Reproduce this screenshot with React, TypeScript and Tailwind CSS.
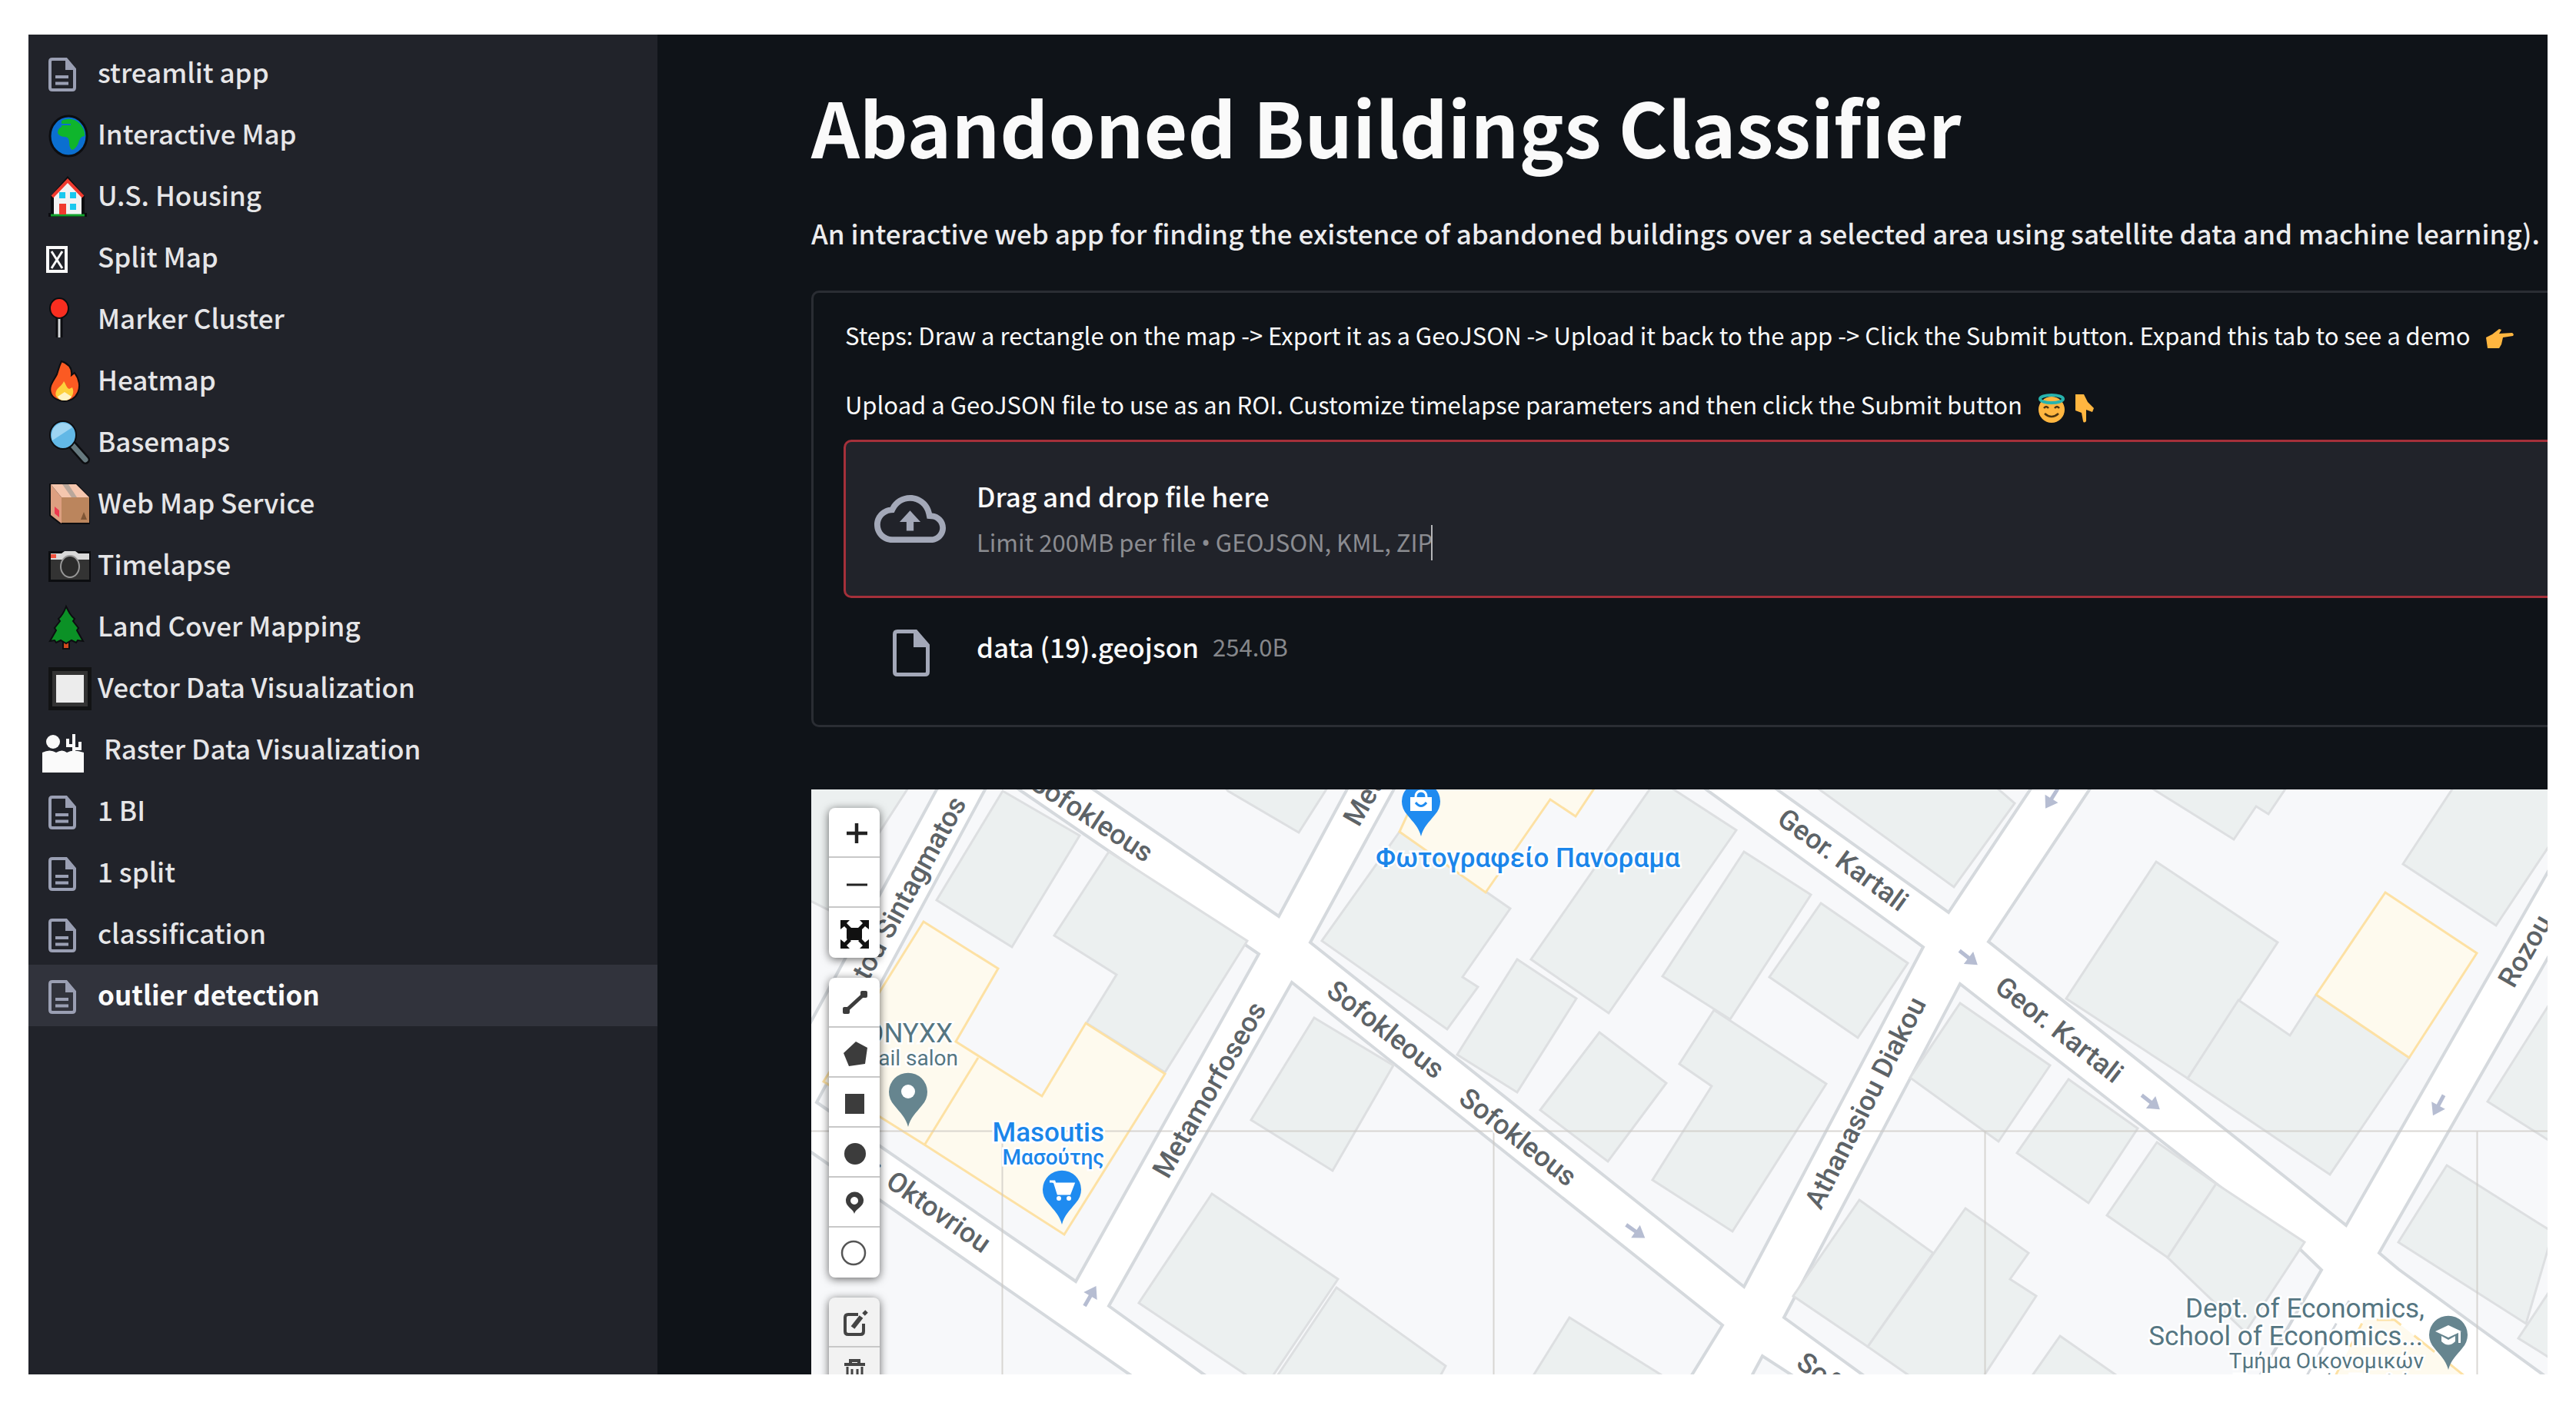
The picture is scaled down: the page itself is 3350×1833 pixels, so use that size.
import type { ReactNode } from 'react';

// Small pictograms used by the page list, all on the same 56x60 grid
function DocIcon() {
  return (
    <g fill="none" stroke="#9a9fb3" strokeWidth="4">
      <path d="M8 12h18l11 13v24q0 3-3 3H8q-3 0-3-3V15q0-3 3-3z" />
      <path d="M25 11v15h13z" fill="#9a9fb3" stroke="none" />
      <path d="M12 35h17M12 43.500h17" />
    </g>
  );
}

const ICONS: Record<string, ReactNode> = {
  doc: <DocIcon />,
  globe: (
    <g>
      <ellipse cx="29" cy="32" rx="24" ry="26" fill="#0b6fd0" stroke="#0c0d10" strokeWidth="3" />
      <path d="M20 12q14-6 24 4 7 8 6 16-5 0-7 6-3 10-9 12-4-2-4-10 0-6-5-7-8 0-10-5 0-6 5-8z" fill="#0fb52c" />
      <path d="M20 17h12" stroke="#0b6fd0" strokeWidth="2" />
    </g>
  ),
  house: (
    <g>
      <path d="M3 57h50v-5h-3V30L28 4 6 30v22H3z" fill="#0c0d10" />
      <path d="M10 30v25h36V30L28 11z" fill="#f2f2f2" />
      <path d="M8 31L28 10l20 21" fill="none" stroke="#f03a2e" strokeWidth="4" />
      <path d="M6 55h44" stroke="#12a12c" strokeWidth="3" />
      <path d="M17 40h9v14h-9z" fill="#f03a2e" />
      <path d="M17 25h8v8h-8zM31 25h8v8h-8zM31 40h8v8h-8z" fill="#19c8ee" />
    </g>
  ),
  missing: (
    <g fill="none" stroke="#fafafa">
      <path d="M2 17h24v31H2z" strokeWidth="4" />
      <path d="M7 22l14 22M21 22L7 44" strokeWidth="3" />
    </g>
  ),
  pin: (
    <g>
      <path d="M17 18v36" stroke="#0c0d10" strokeWidth="9" />
      <path d="M17 26v28" stroke="#d5d8da" strokeWidth="3" />
      <ellipse cx="17" cy="16" rx="12" ry="13" fill="#fa2e20" stroke="#0c0d10" strokeWidth="2" />
    </g>
  ),
  fire: (
    <g>
      <path
        d="M20 5c9 3 14 9 13 18l4-3c6 8 8 18 4 26-3 7-10 11-17 11S8 53 6 46C3 37 10 30 14 22c2-6 3-11 6-17z"
        fill="#fb5a22"
        stroke="#0c0d10"
        strokeWidth="2"
      />
      <path d="M23 31c3 4 3 8 7 10l4-2c4 8-2 17-10 17S9 50 14 42c3-4 7-6 9-11z" fill="#fdd03c" />
      <path d="M24 45l9 6q-3 5-9 5-7 0-9-5z" fill="#fff3c4" />
    </g>
  ),
  magnifier: (
    <g>
      <path d="M35 35l16 18" stroke="#0c0d10" strokeWidth="12" strokeLinecap="round" />
      <path d="M35 35l16 18" stroke="#66797f" strokeWidth="7" strokeLinecap="round" />
      <ellipse cx="22" cy="21" rx="17" ry="18" fill="#62b8e6" stroke="#0c0d10" strokeWidth="2" />
      <path d="M8 28Q4 10 20 5q10 0 14 6z" fill="#9ed5f2" />
    </g>
  ),
  box: (
    <g>
      <path d="M4 4h36l17 18v35H18L4 46z" fill="#0c0d10" />
      <path d="M6 5l14 17v34L6 45z" fill="#dd9f80" />
      <path d="M20 22h36v33H20z" fill="#bb855d" />
      <path d="M6 5h33l17 17H20z" fill="#f5c6ae" />
      <path d="M21 5h8l11 17h-7z" fill="#b9a79b" />
      <path d="M11 34l6 5v9l-6-5z" fill="#ee3a50" />
      <path d="M45 51l4-10 4 10z" fill="#7f5636" />
    </g>
  ),
  camera: (
    <g>
      <path d="M3 12h55v40H3z" fill="#0c0d10" />
      <path d="M6 22h50v27H6z" fill="#333" />
      <path d="M6 15h14l4-3h14l4 3h14v8H6z" fill="#d9d9d9" />
      <path d="M6 16h7v5H6z" fill="#f0523e" />
      <ellipse cx="31" cy="32" rx="12" ry="14" fill="#2b2b2b" stroke="#979797" strokeWidth="2" />
    </g>
  ),
  tree: (
    <g stroke="#0c0d10" strokeWidth="2">
      <path d="M22 46h8v13h-8z" fill="#d14a1d" />
      <path d="M26 4c4 8 6 12 11 16l-2 3 7 9-2 3 8 14-7-1-2 3-6-3-7 4-7-4-6 3-2-3-6 1 8-14-2-3 7-9-2-3c5-4 7-8 10-16z" fill="#0b9126" />
    </g>
  ),
  square: (
    <g>
      <path d="M3 3h56v56H3z" fill="#121314" />
      <path d="M8 8h46v46H8z" fill="#333" />
      <path d="M13 13h36v36H13z" fill="#ececec" />
    </g>
  ),
  desert: (
    <g fill="#fafafa">
      <circle cx="9" cy="20" r="9" />
      <path d="M-5 34q10-5 18 0 8-5 14 0 8-5 22 0v26H-5z" />
      <path d="M36 34V10M28 16v9h8M44 20v9h-8" fill="none" stroke="#fafafa" strokeWidth="4" />
    </g>
  ),
};

const PAGES = [
  { name: 'streamlit app', icon: 'doc' },
  { name: 'Interactive Map', icon: 'globe' },
  { name: 'U.S. Housing', icon: 'house' },
  { name: 'Split Map', icon: 'missing' },
  { name: 'Marker Cluster', icon: 'pin' },
  { name: 'Heatmap', icon: 'fire' },
  { name: 'Basemaps', icon: 'magnifier' },
  { name: 'Web Map Service', icon: 'box' },
  { name: 'Timelapse', icon: 'camera' },
  { name: 'Land Cover Mapping', icon: 'tree' },
  { name: 'Vector Data Visualization', icon: 'square' },
  { name: '\u00a0Raster Data Visualization', icon: 'desert' },
  { name: '1 BI', icon: 'doc' },
  { name: '1 split', icon: 'doc' },
  { name: 'classification', icon: 'doc' },
  { name: 'outlier detection', icon: 'doc', active: true },
];

function Sidebar() {
  return (
    <nav className="w-[818px] shrink-0 bg-[#21232a] pt-2.5">
      <ul>
        {PAGES.map(({ name, icon, active }) => (
          <li key={name}>
            <a
              href="#"
              className={`flex h-20 items-center pl-[23px] text-[35px] whitespace-pre ${
                active ? 'bg-[#31333c] font-bold text-[#fafafa]' : 'font-medium text-[#e6e6e8]'
              }`}
            >
              <svg viewBox="0 0 56 60" className="mr-[11px] h-[60px] w-[56px] shrink-0 overflow-visible">
                {ICONS[icon]}
              </svg>
              <span className="pb-1 leading-[48px]">{name}</span>
            </a>
          </li>
        ))}
      </ul>
    </nav>
  );
}

function PointRight() {
  return (
    <svg viewBox="0 0 38 26" className="ml-5 inline h-[26px] w-[38px]">
      <path d="M3 25L1 11l8-4 9-7 3 1-3 5 17-1q3 2 1 4l-13 2-2 9-3 5z" fill="#ffb640" />
    </svg>
  );
}

function PointDown() {
  return (
    <svg viewBox="0 0 26 38" className="ml-3 inline h-[38px] w-[26px]">
      <path d="M1 1h11l5 10 8 8-2 5-8-3v15q-3 3-4 0l-2-11-8-3z" fill="#ffb640" />
    </svg>
  );
}

function HaloFace() {
  return (
    <svg viewBox="0 0 36 38" className="ml-5 inline h-[38px] w-[36px]">
      <ellipse cx="18" cy="21" rx="17" ry="17" fill="#ffb640" />
      <ellipse cx="18" cy="7" rx="15" ry="5" fill="none" stroke="#27b3ad" strokeWidth="4" />
      <path d="M8 19q3-4 6 0M22 19q3-4 6 0M9 26q9 8 18 0" fill="none" stroke="#4d3510" strokeWidth="2.500" />
    </svg>
  );
}

function UploadPanel() {
  return (
    <section className="mt-[51px] rounded-l-[10px] border-[3px] border-r-0 border-[#2a2d33] pt-[31px] pb-[61px] pl-[39px]">
      <p className="pl-0.5 text-[31px] leading-[48px] whitespace-nowrap">
        {'Steps: Draw a rectangle on the map -> Export it as a GeoJSON -> Upload it back to the app -> Click the Submit button. Expand this tab to see a demo'}
        <PointRight />
      </p>
      <p className="mt-[42px] pl-0.5 text-[31px] leading-[48px] whitespace-nowrap">
        Upload a GeoJSON file to use as an ROI. Customize timelapse parameters and then click the Submit button
        <HaloFace />
        <PointDown />
      </p>

      <label className="mt-[22px] flex h-[206px] items-center rounded-l-[10px] border-[3px] border-r-0 border-[#a5303a] bg-[#21232a] pl-[37px]">
        <input type="file" className="sr-only" />
        <svg viewBox="0 4 24 16" className="mr-10 h-[62px] w-[93px]" fill="#a3a8b8">
          <path d="M19.350 10.040C18.670 6.590 15.640 4 12 4 9.110 4 6.600 5.640 5.350 8.040 2.340 8.360 0 10.910 0 14c0 3.310 2.690 6 6 6h13c2.760 0 5-2.240 5-5 0-2.640-2.050-4.780-4.650-4.960zM19 18H6c-2.210 0-4-1.790-4-4 0-2.050 1.530-3.760 3.560-3.970l1.070-.110.500-.950C8.080 7.140 9.940 6 12 6c2.620 0 4.880 1.860 5.390 4.430l.300 1.500 1.530.110c1.560.100 2.780 1.410 2.780 2.960 0 1.650-1.350 3-3 3z" />
          <path d="M8.500 13h2.300v3h2.400v-3h2.300L12 9.200z" />
        </svg>
        <span className="flex flex-col">
          <span className="text-[35px] leading-[60px] font-medium">Drag and drop file here</span>
          <span className="relative text-[31px] leading-[60px] text-[#8b8c91]">
            Limit 200MB per file <span className="font-['Noto_Sans']">•</span> GEOJSON, KML, ZIP
            <span className="absolute top-2 right-0 h-[46px] w-0.5 bg-[#b4b5b8]" />
          </span>
        </span>
      </label>

      <div className="mt-[38px] flex h-[66px] items-center pl-[64px]">
        <svg viewBox="0 0 48 61" className="mr-[61px] h-[61px] w-[48px]">
          <path d="M6 2.500h24l15.500 18V55q0 3.500-3.500 3.500H6q-3.500 0-3.500-3.500V6q0-3.500 3.500-3.500z" fill="none" stroke="#a3a8b8" strokeWidth="5" />
          <path d="M27 2v21h20z" fill="#a3a8b8" />
        </svg>
        <span className="pb-4 text-[35px] leading-[48px] font-medium">data (19).geojson</span>
        <span className="ml-[18px] pb-4 text-[31px] leading-[48px] text-[#85878b]">254.0B</span>
      </div>
    </section>
  );
}

// City blocks; whatever lies between them reads as streets
const BLOCKS = [
  '249,-40 225,2 7,407 344,640 582,214 273,2 220,-35',
  '-10,-10 170,-10 162,2 -10,320',
  '350,-10 370,2 608,165 701,-8',
  '762,-8 649,199 1213,647 1446,205 1150,-10',
  '625,251 1185,697 1137,775 530,775 387,672',
  '-10,465 0,472 434,775 -10,775',
  '1242,-10 1479,160 1592,-10',
  '1669,-10 1531,198 1996,567 2270,87 2270,-10',
  '1494,253 1265,687 1390,778 1875,778 1964,625 1936,598',
  '2039,603 2064,624 2275,778 2275,190',
  '1237,737 1215,778 1300,778',
];

const BUILDINGS = [
  '-5,-5 128,-5 23,157 -5,143',
  '249,2 349,60 261,205 163,144',
  '387,81 567,197 460,368 358,304 397,241 316,190',
  '536,-5 542,2 634,56 673,-5',
  '654,297 757,359 678,496 572,430',
  '521,526 685,637 590,778 426,668',
  '683,648 825,750 810,778 596,778',
  '986,687 1130,777 930,777',
  '765,55 909,155 847,244 867,257 827,312 664,197',
  '1100,-14 1203,53 1037,291 936,221',
  '1213,81 1300,137 1195,299 1107,243',
  '1313,148 1426,226 1361,323 1246,244',
  '918,221 995,272 918,394 840,345',
  '1025,316 1112,382 1036,484 948,417',
  '1174,287 1320,383 1198,575 1094,508 1171,386 1129,357',
  '1300,-8 1486,127 1565,18 1535,-8',
  '1733,-8 1850,65 1879,22 1895,32 1922,-8',
  '2139,-8 2070,97 2191,177 2265,66 2265,-8',
  '1749,94 1907,199 1790,376 1632,272',
  '1856,274 1923,320 1957,267 2078,349 1975,501 1790,376',
  '1494,278 1611,359 1544,458 1429,375',
  '1635,377 1725,441 1661,538 1568,473',
  '1750,459 1827,513 1764,609 1685,554',
  '1827,513 1942,589 1865,706 1764,609',
  '1363,534 1459,603 1374,725 1277,659',
  '1501,545 1583,603 1559,637 1593,659 1515,778 1450,778 1374,725',
  '1624,711 1720,778 1577,778',
  '2127,489 2265,576 2230,695 2064,589',
  '2265,646 2220,714 2265,742',
  '2265,272 2180,406 2265,460',
];

const SHOPS = [
  '146,172 243,233 188,328 300,399 357,304 460,370 329,579 147,462 16,380',
  '795,-10 765,55 877,134 961,13 994,35 1024,-10',
  '2047,134 2166,213 2078,349 1957,267',
];

// x, y and angle of where the baseline starts
const STREETS: [string, number, number, number][] = [
  ['Sofokleous', 282, -3, 33],
  ['Sofokleous', 668, 266, 38],
  ['Sofokleous', 840, 406, 38],
  ['Sofokleous', 1279, 750, 37],
  ['tou Sintagmatos', 74, 250, -61],
  ['Metamorfoseos', 464, 508, -60],
  ['Metamorfoseos', 712, 50, -60],
  ['Oktovriou', 95, 515, 35],
  ['Geor. Kartali', 1254, 43, 36],
  ['Geor. Kartali', 1537, 261, 38],
  ['Athanasiou Diakou', 1313, 548, -63],
  ['Rozou', 2214, 260, -60],
];

const ARROWS = [
  [363, 659, -60],
  [1072, 575, 35],
  [1505, 219, 38],
  [1742, 407, 38],
  [1613, 12, 122],
  [2116, 411, 118],
];

function Pin({ x, y, color, children }: { x: number; y: number; color: string; children: ReactNode }) {
  return (
    <g transform={`translate(${x} ${y})`}>
      <path d="M0 46C-3 34-10 28-18 18A25 25 0 1 1 18 18C10 28 3 34 0 46z" fill={color} />
      {children}
    </g>
  );
}

function StreetMap() {
  return (
    <svg
      viewBox="0 0 2258 762"
      preserveAspectRatio="xMinYMin slice"
      className="absolute inset-0 h-full w-full bg-white font-['Roboto','Noto_Sans',sans-serif]"
    >
      <g fill="#f7f8fa" stroke="#d5d9dd" strokeWidth="4">
        {BLOCKS.map((p) => <polygon key={p} points={p} />)}
      </g>
      <g fill="#ecf0f0" stroke="#dddfe1" strokeWidth="3">
        {BUILDINGS.map((p) => <polygon key={p} points={p} />)}
      </g>
      <g fill="#fefaee" stroke="#fde1a4" strokeWidth="3">
        {SHOPS.map((p) => <polygon key={p} points={p} />)}
        <path d="M217 349L147 463" />
        <path d="M1976 775l43-85h40l106 85z" strokeDasharray="34 22" />
      </g>
      <path d="M1943 661l-63 110M2000 665l-62 110" fill="none" stroke="#d3d7dc" strokeWidth="3" strokeDasharray="16 18" />

      {/* tile seams */}
      <path d="M0 444.500h2258M248.500 444v320M887.500 444v320M1526.500 444v320M2166.500 444v320" stroke="#cbc7c2" strokeWidth="2" opacity=".7" />

      <g fill="#b6bdd2">
        {ARROWS.map(([x, y, a]) => (
          <path key={`${x}-${y}`} d="M-15-2.500H0V-10L15 0 0 10V2.500h-15z" transform={`translate(${x} ${y}) rotate(${a})`} />
        ))}
      </g>

      <g fill="#5d6367" stroke="#fff" strokeWidth="5" paintOrder="stroke" fontSize="36" fontWeight="500">
        {STREETS.map(([name, x, y, a]) => (
          <text key={`${x}-${y}`} transform={`translate(${x} ${y}) rotate(${a})`}>{name}</text>
        ))}
        <text x="83" y="492">.</text>
      </g>

      <g stroke="#fff" strokeWidth="5" paintOrder="stroke" fontWeight="500" fill="#1b86ea">
        <text x="734" y="101" fontSize="35">Φωτογραφείο Πανοραμα</text>
        <text x="381" y="458" fontSize="35" textAnchor="end">Masoutis</text>
        <text x="381" y="488" fontSize="28" textAnchor="end">Μασούτης</text>
      </g>
      <g stroke="#fff" strokeWidth="5" paintOrder="stroke" fill="#557682" textAnchor="end">
        <text x="184" y="329" fontSize="35">ONYXX</text>
        <text x="191" y="359" fontSize="28">nail salon</text>
        <text x="2098" y="687" fontSize="35">Dept. of Economics,</text>
        <text x="2096" y="723" fontSize="35">School of Economics...</text>
        <text x="2097" y="753" fontSize="28">Τμήμα Οικονομικών</text>
        <text x="2080" y="781" fontSize="28">Γραμματεία Σχολή</text>
      </g>

      <Pin x={126} y={393} color="#66858f">
        <circle r="9" fill="#fff" />
      </Pin>
      <Pin x={326} y={520} color="#1f8bf0">
        <path d="M-16-10h6l5 16h15l5-13H-8" fill="#fff" stroke="#fff" strokeWidth="3" />
        <circle cx="-4" cy="12" r="3" fill="#fff" />
        <circle cx="9" cy="12" r="3" fill="#fff" />
      </Pin>
      <Pin x={793} y={15} color="#1f8bf0">
        <path d="M-14-5h28v18h-28z" fill="#fff" />
        <path d="M-7-5q0-8 7-8t7 8" fill="none" stroke="#fff" strokeWidth="3" />
        <path d="M-7 2q7 9 14 0" fill="none" stroke="#1f8bf0" strokeWidth="3" />
      </Pin>
      <Pin x={2129} y={709} color="#66858f">
        <path d="M0-12l17 8L0 4l-17-8z" fill="#fff" />
        <path d="M-9 2v7q9 9 18 0V2L0 7zM13-3h3v14h-3z" fill="#fff" />
      </Pin>
    </svg>
  );
}

const TOOL_GROUPS: { disabled?: boolean; tools: { name: string; icon: ReactNode }[] }[] = [
  {
    tools: [
      { name: 'Zoom in', icon: <path d="M23 33h27M36 20v26" stroke="#222" strokeWidth="4.500" /> },
      { name: 'Zoom out', icon: <path d="M23 35h27" stroke="#222" strokeWidth="3" /> },
      {
        name: 'Full screen',
        icon: (
          <g fill="#111">
            <rect x="23" y="26" width="20" height="16" rx="3" />
            <path d="M15 16h12l-4 4 6 6-4 3-5-5-5 4zM52 16H40l4 4-6 6 4 3 5-5 5 4zM15 53h12l-4-4 6-6-4-3-5 5-5-4zM52 53H40l4-4-6-6 4-3 5 5 5-4z" />
          </g>
        ),
      },
    ],
  },
  {
    tools: [
      {
        name: 'Draw a polyline',
        icon: (
          <g fill="#3c3c3c">
            <path d="M22 43L46 21" stroke="#3c3c3c" strokeWidth="5" />
            <rect x="18" y="38" width="9" height="9" rx="2" />
            <rect x="41" y="17" width="9" height="9" rx="2" />
          </g>
        ),
      },
      { name: 'Draw a polygon', icon: <path d="M35 18l15 8-3 21-21 3-7-17z" fill="#3c3c3c" /> },
      { name: 'Draw a rectangle', icon: <path d="M21 21h25v26H21z" fill="#3c3c3c" /> },
      { name: 'Draw a circle', icon: <circle cx="34" cy="34" r="14" fill="#3c3c3c" /> },
      {
        name: 'Draw a marker',
        icon: <path fillRule="evenodd" d="M33 47C31 40 22 38 22 30a11 11 0 0 1 23 0c0 8-10 10-12 17zM33 25a5 5 0 1 0 .1 0z" fill="#3c3c3c" />,
      },
      { name: 'Draw a circle marker', icon: <circle cx="32" cy="33" r="15" fill="none" stroke="#555" strokeWidth="2.500" /> },
    ],
  },
  {
    disabled: true,
    tools: [
      {
        name: 'Edit layers',
        icon: (
          <g fill="none" stroke="#444" strokeWidth="4">
            <path d="M38 22H25q-4 0-4 4v18q0 4 4 4h16q4 0 4-4V34" />
            <path d="M31 39l11-14" strokeWidth="6" />
            <path d="M45 22l4-4" strokeWidth="5" />
          </g>
        ),
      },
      {
        name: 'Delete layers',
        icon: (
          <g fill="none" stroke="#444" strokeWidth="3">
            <path d="M20 22h27M28 21v-4h11v4" strokeWidth="4" />
            <path d="M24 25v22h19V25M30 28v16M37 28v16" />
          </g>
        ),
      },
    ],
  },
];

function MapControls() {
  return (
    <div className="absolute top-6 left-[23px] flex w-[66px] flex-col gap-[26px]">
      {TOOL_GROUPS.map(({ tools, disabled }) => (
        <div
          key={tools[0].name}
          className={`overflow-hidden rounded-lg shadow-[0_2px_12px_rgba(0,0,0,0.6)] ${disabled ? 'bg-[#f2f2f2]' : 'bg-white'}`}
        >
          {tools.map(({ name, icon }) => (
            <button key={name} aria-label={name} className="block h-[65px] w-full border-b-2 border-[#c8c8c8] last:border-b-0">
              <svg viewBox="0 0 66 65" className="h-[65px] w-[66px]" fill="none">
                {icon}
              </svg>
            </button>
          ))}
        </div>
      ))}
    </div>
  );
}

export default function App() {
  return (
    <div className="h-screen bg-white px-[37px] py-[45px] font-['Noto_Sans_CJK_SC','Noto_Sans',sans-serif]">
      <div className="flex h-full overflow-hidden bg-[#0f1318] text-[#fafafa]">
        <Sidebar />
        <main className="flex min-w-0 flex-1 flex-col overflow-hidden pt-[59px] pl-[200px]">
          <h1 className="text-[98px] leading-[118px] font-bold whitespace-nowrap">Abandoned Buildings Classifier</h1>
          <p className="mt-[57px] text-[35px] leading-[48px] font-medium whitespace-nowrap text-[#ececee]">
            An interactive web app for finding the existence of abandoned buildings over a selected area using satellite data and machine learning).
          </p>
          <UploadPanel />
          <div className="relative mt-[81px] min-h-0 flex-1 overflow-hidden">
            <StreetMap />
            <MapControls />
          </div>
        </main>
      </div>
    </div>
  );
}
